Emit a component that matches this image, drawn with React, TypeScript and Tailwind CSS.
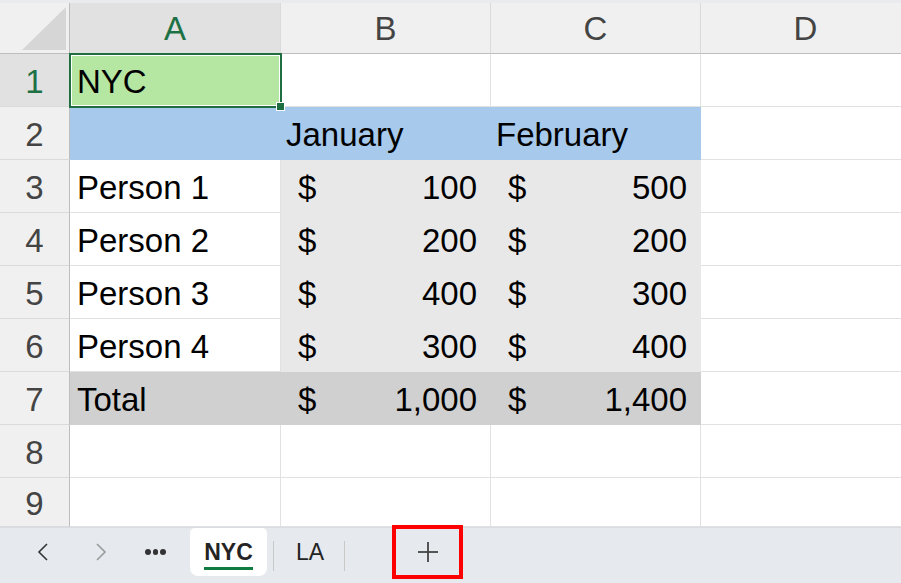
import React from "react";

const FONT = { fontFamily: '"Liberation Sans", Arial, sans-serif' };

type Cell = {
  text?: string;
  acct?: string;
  bg?: string;
};

const rows: Cell[][] = [
  [{ text: "NYC", bg: "bg-[#b5e6a2]" }, {}, {}, {}],
  [
    { text: "", bg: "bg-[#a6c9ec]" },
    { text: "January", bg: "bg-[#a6c9ec]" },
    { text: "February", bg: "bg-[#a6c9ec]" },
    {},
  ],
  [{ text: "Person 1" }, { acct: "100", bg: "bg-[#e8e8e8]" }, { acct: "500", bg: "bg-[#e8e8e8]" }, {}],
  [{ text: "Person 2" }, { acct: "200", bg: "bg-[#e8e8e8]" }, { acct: "200", bg: "bg-[#e8e8e8]" }, {}],
  [{ text: "Person 3" }, { acct: "400", bg: "bg-[#e8e8e8]" }, { acct: "300", bg: "bg-[#e8e8e8]" }, {}],
  [{ text: "Person 4" }, { acct: "300", bg: "bg-[#e8e8e8]" }, { acct: "400", bg: "bg-[#e8e8e8]" }, {}],
  [
    { text: "Total", bg: "bg-[#d0d0d0]" },
    { acct: "1,000", bg: "bg-[#d0d0d0]" },
    { acct: "1,400", bg: "bg-[#d0d0d0]" },
    {},
  ],
  [{}, {}, {}, {}],
  [{}, {}, {}, {}],
];

function GridCell({ c, r, ci }: { c: Cell; r: number; ci: number }) {
  const filled = !!c.bg;
  const last = r === 8;
  const border = filled ? "" : "border-r border-b border-[#e1e1e1]";
  const h = last ? "h-[49px]" : "h-[53px]";
  const sel = r === 0 && ci === 0;
  return (
    <div
      className={`relative ${sel ? "z-10" : ""} ${h} ${c.bg ?? "bg-white"} ${border} flex items-center text-[33px] text-black leading-none pt-[2px]`}
    >
      {c.acct !== undefined ? (
        <div className="flex w-full items-center justify-between pl-[17px] pr-[14px]">
          <span>$</span>
          <span>{c.acct}</span>
        </div>
      ) : c.text ? (
        <span className={ci === 0 ? "pl-[7px]" : "pl-[5px]"}>{c.text}</span>
      ) : null}
      {sel && (
        <div className="absolute left-[-1px] top-[-1px] right-[-1px] bottom-[-1px] border-2 border-[#1e6e42]">
          <div className="absolute inset-0 border border-white" />
          <div className="absolute right-[-5px] bottom-[-5px] w-[9px] h-[9px] bg-[#1e6e42] border border-white" />
        </div>
      )}
    </div>
  );
}

export default function App() {
  const cols = ["A", "B", "C", "D"];
  return (
    <div className="w-[901px] h-[583px] overflow-hidden bg-white flex flex-col" style={FONT}>
      <div className="h-[3px] bg-[#e9ebee] shrink-0" />
      <div className="grid grid-cols-[70px_211px_210px_210px_210px] shrink-0 w-[911px]">
        {/* corner */}
        <div className="h-[51px] bg-[#f0f0f0] border-r border-b border-[#bdbdbd] flex items-end justify-end pr-[3px] pb-[3px]">
          <svg width="44" height="43" viewBox="0 0 44 43">
            <polygon points="44,0 44,43 0,43" fill="#d6d6d6" />
          </svg>
        </div>
        {cols.map((c, i) => (
          <div
            key={c}
            className={`h-[51px] border-b border-b-[#bdbdbd] border-r border-r-[#dadada] flex items-center justify-center text-[33px] leading-none ${
              i === 0 ? "bg-[#e1e1e1] text-[#1e7145]" : "bg-[#f0f0f0] text-[#444444]"
            }`}
          >
            {c}
          </div>
        ))}
        {rows.map((row, r) => (
          <React.Fragment key={r}>
            <div
              className={`${r === 8 ? "h-[49px]" : "h-[53px]"} border-r border-r-[#bdbdbd] border-b border-b-[#dadada] flex items-center justify-center text-[33px] leading-none pt-[2px] ${
                r === 0 ? "bg-[#e1e1e1] text-[#1e7145]" : "bg-[#f0f0f0] text-[#444444]"
              }`}
            >
              {r + 1}
            </div>
            {row.map((c, ci) => (
              <GridCell key={ci} c={c} r={r} ci={ci} />
            ))}
          </React.Fragment>
        ))}
      </div>
      {/* sheet tabs */}
      <div className="flex-1 bg-[#e6e9ee] border-t border-[#d9dce1] flex items-start relative">
        <div className="w-[190px] h-[48px] flex items-center">
          <svg width="12" height="18" viewBox="0 0 12 18" className="ml-[37px]">
            <polyline points="10,1 2,9 10,17" fill="none" stroke="#333" strokeWidth="1.6" />
          </svg>
          <svg width="12" height="18" viewBox="0 0 12 18" className="ml-[46px]">
            <polyline points="2,1 10,9 2,17" fill="none" stroke="#999" strokeWidth="1.6" />
          </svg>
          <div className="flex gap-[2px] ml-[38px]">
            <span className="w-[5.5px] h-[5.5px] rounded-full bg-[#333]" />
            <span className="w-[5.5px] h-[5.5px] rounded-full bg-[#333]" />
            <span className="w-[5.5px] h-[5.5px] rounded-full bg-[#333]" />
          </div>
        </div>
        <div className="w-[77px] h-[48px] bg-white rounded-b-[8px] rounded-t-[5px] flex flex-col items-center justify-center relative">
          <span className="text-[23px] font-bold text-[#242424] leading-none mt-[1px]">NYC</span>
          <div className="absolute left-[14px] right-[14px] bottom-[6px] h-[3px] bg-[#107c41]" />
        </div>
        <div className="w-px h-[30px] bg-[#c8c8c8] mt-[13px] ml-[6px]" />
        <div className="w-[70px] h-[48px] flex items-center justify-center text-[23px] text-[#242424] pl-[2px]">LA</div>
        <div className="w-px h-[30px] bg-[#c8c8c8] mt-[13px]" />
        <div className="ml-[47px] -mt-[3px] w-[71px] h-[54px] border-[4px] border-[#ff0000] flex items-center justify-center">
          <svg width="20" height="20" viewBox="0 0 20 20">
            <line x1="10" y1="0" x2="10" y2="20" stroke="#444" strokeWidth="1.8" />
            <line x1="0" y1="10" x2="20" y2="10" stroke="#444" strokeWidth="1.8" />
          </svg>
        </div>
      </div>
    </div>
  );
}
